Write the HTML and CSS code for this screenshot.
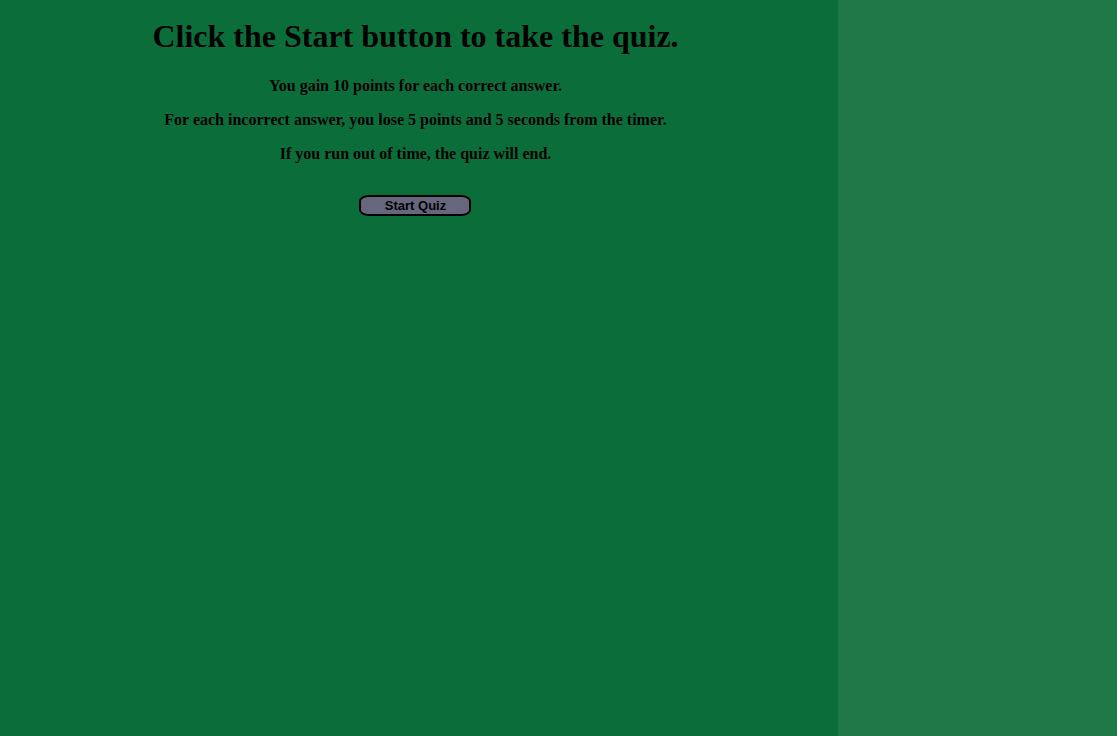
FILE: index.html
```html
<!DOCTYPE html>
<html>
<head>
<meta charset="utf-8">
<link rel="stylesheet" href="styles.css">
</head>
<body>
<div class="layout">
  <main class="main">
    <div class="intro">
      <h1 class="title">Click the Start button to take the quiz.</h1>
      <p class="rule">You gain 10 points for each correct answer.</p>
      <p class="rule">For each incorrect answer, you lose 5 points and 5 seconds from the timer.</p>
      <p class="rule">If you run out of time, the quiz will end.</p>
      <button class="start">Start Quiz</button>
    </div>
  </main>
  <aside class="side"></aside>
</div>
</body>
</html>
```
FILE: styles.css
```css
html, body {
  margin: 0;
  padding: 0;
  height: 100%;
}
body {
  font-family: "Liberation Serif", "Times New Roman", serif;
  color: #000;
}
.layout {
  display: flex;
  height: 100%;
}
.main {
  width: 838px;
  background: #0b6e3a;
  padding-right: 7px;
  box-sizing: border-box;
}
.side {
  flex: 1;
  background: #1f7848;
}
.intro {
  text-align: center;
}
.title {
  font-size: 32px;
  font-weight: bold;
  margin: 0 0 22px;
  padding-top: 18px;
}
.rule {
  font-size: 16px;
  font-weight: bold;
  margin: 16px 0;
}
.start {
  margin-top: 16px;
  margin-right: 2px;
  width: 112px;
  height: 21px;
  padding: 0 0 0 2px;
  border: 2px solid #000;
  border-radius: 10px / 6px;
  background: #66667e;
  color: #000;
  font-family: "Liberation Sans", Arial, sans-serif;
  font-size: 13px;
  font-weight: bold;
}
```
